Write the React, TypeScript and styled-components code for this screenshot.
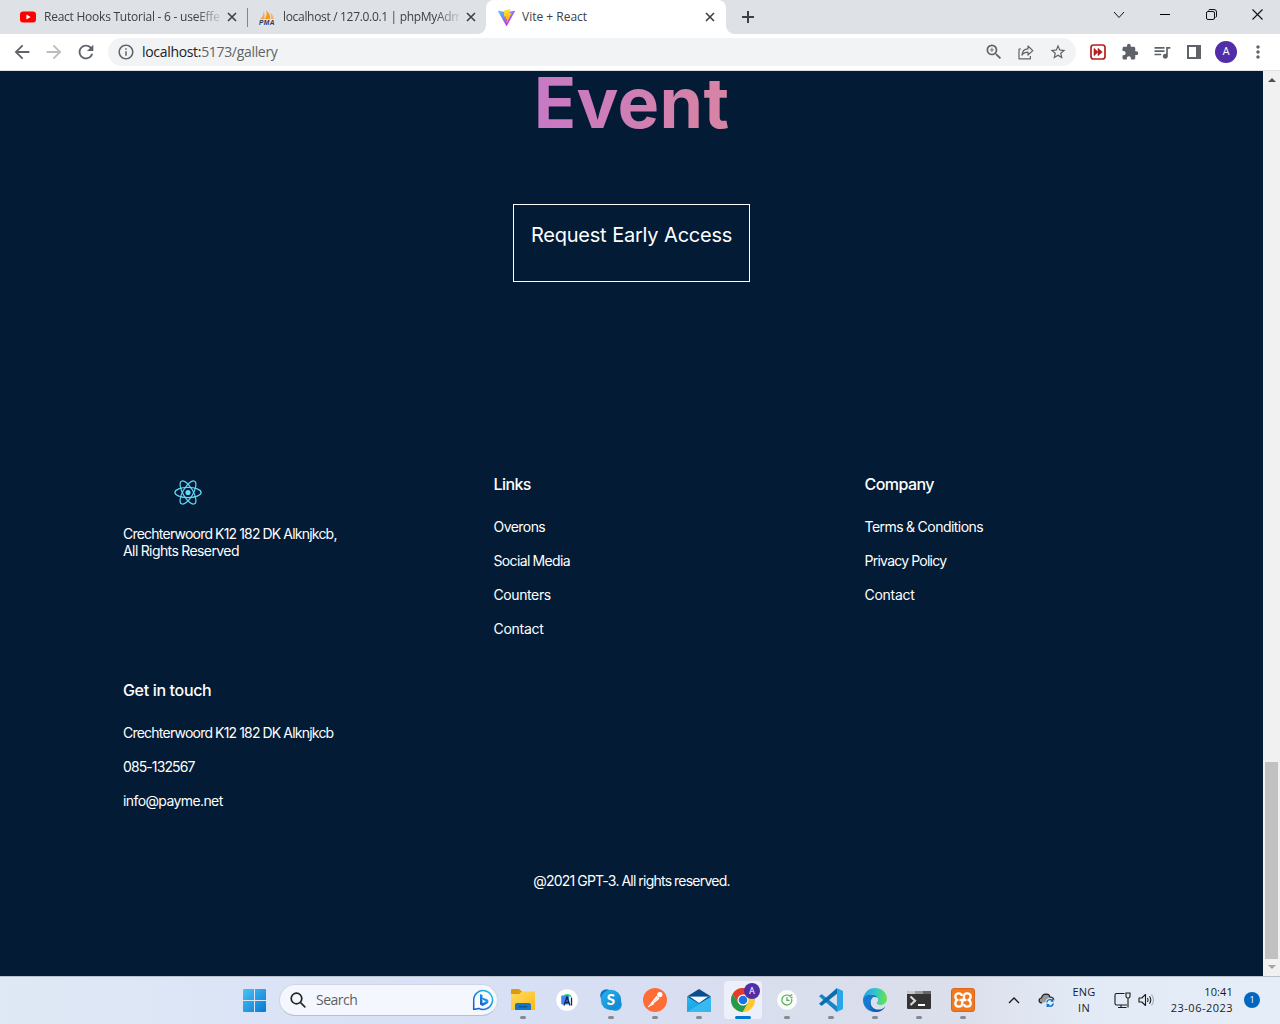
import React from "react";
import styled, { createGlobalStyle } from "styled-components";
import {
  MdArrowBack,
  MdArrowForward,
  MdRefresh,
  MdInfoOutline,
  MdZoomIn,
  MdStarBorder,
  MdExtension,
  MdQueueMusic,
  MdMoreVert,
} from "react-icons/md";

const uiFont = `"Open Sans", "Noto Sans", sans-serif`;
const pageFont = `Inter, "Liberation Sans", sans-serif`;

const GlobalStyle = createGlobalStyle`
  html, body { margin: 0; padding: 0; background: #031b34; }
  *, *::before, *::after { box-sizing: border-box; }
  p, h1, h4 { margin: 0; }
  svg { display: block; flex: none; }
`;

const Screen = styled.div`
  width: 1280px;
  height: 1024px;
  display: flex;
  flex-direction: column;
  overflow: hidden;
  font-family: ${uiFont};
`;

const TabStrip = styled.div`
  height: 34px;
  flex: none;
  display: flex;
  background: #dee1e6;
  color: #3c4043;
`;

const Tab = styled.div<{ $first?: boolean; $active?: boolean }>`
  position: relative;
  width: ${(p) => (p.$first ? 247 : p.$active ? 240 : 238)}px;
  height: 34px;
  display: flex;
  align-items: center;
  padding-left: ${(p) => (p.$first ? 20 : p.$active ? 12 : 11)}px;
  background: ${(p) => (p.$active ? "#fff" : "transparent")};
  border-radius: 8px 8px 0 0;
  ${(p) =>
    p.$active &&
    `
    &::before, &::after {
      content: "";
      position: absolute;
      bottom: 0;
      width: 8px;
      height: 8px;
    }
    &::before { left: -8px; background: radial-gradient(circle at 0 0, transparent 7.5px, #fff 8px); }
    &::after { right: -8px; background: radial-gradient(circle at 100% 0, transparent 7.5px, #fff 8px); }
  `}
`;

const TabDivider = styled.div`
  width: 1px;
  height: 19px;
  margin: 8px 0 0 0;
  background: #80868b;
`;

const TabTitle = styled.div<{ $ls: number; $fade?: boolean }>`
  width: 176px;
  margin-left: ${(p) => (p.$fade ? 8 : 7)}px;
  overflow: hidden;
  white-space: nowrap;
  font-size: 12px;
  line-height: 18px;
  letter-spacing: ${(p) => p.$ls}px;
  ${(p) => p.$fade && `mask-image: linear-gradient(to right, #000 152px, transparent 180px);`}
`;

const CloseSlot = styled.div`
  width: 24px;
  display: flex;
  justify-content: center;
`;

const NewTab = styled.div`
  width: 44px;
  display: flex;
  align-items: center;
  justify-content: center;
`;

const WindowControls = styled.div`
  margin-left: auto;
  height: 29px;
  display: flex;
`;

const WindowButton = styled.div`
  width: 46px;
  display: flex;
  align-items: center;
  justify-content: center;
  color: #111;
`;

const Toolbar = styled.div`
  height: 37px;
  flex: none;
  display: flex;
  align-items: center;
  padding: 0 6px 1px;
  background: #fff;
  border-bottom: 1px solid #dde1e2;
  color: #5f6368;
`;

const Slot = styled.div<{ $dim?: boolean }>`
  width: 32px;
  height: 28px;
  flex: none;
  display: flex;
  align-items: center;
  justify-content: center;
  color: ${(p) => (p.$dim ? "#babcbe" : "#5f6368")};
`;

const Omnibox = styled.div`
  flex: 1;
  height: 28px;
  margin: 0 6px;
  padding: 0 2px 0 9px;
  display: flex;
  align-items: center;
  border-radius: 14px;
  background: #f1f3f4;
`;

const Url = styled.div`
  flex: 1;
  margin-left: 7px;
  font-size: 14px;
  line-height: 20px;
  letter-spacing: -0.32px;
  color: #5f6368;
  b {
    font-weight: 400;
    color: #202124;
  }
`;

const Avatar = styled.div`
  width: 22px;
  height: 22px;
  border-radius: 50%;
  display: flex;
  align-items: center;
  justify-content: center;
  background: #512da8;
  color: #fff;
  font: 400 11px Roboto, sans-serif;
`;

const Viewport = styled.div`
  height: 905px;
  flex: none;
  display: flex;
`;

const Page = styled.main`
  flex: 1;
  display: flex;
  flex-direction: column;
  align-items: center;
  overflow: hidden;
  background: #031b34;
  color: #fff;
  font-family: ${pageFont};
`;

const Headline = styled.h1`
  width: 840px;
  height: 64px;
  text-align: center;
  font-size: 70px;
  line-height: 64px;
  font-weight: 700;
  letter-spacing: 0.3px;
  background: linear-gradient(90deg, #ae67fa 1.84%, #f49867 102.67%);
  background-clip: text;
  -webkit-background-clip: text;
  color: transparent;
`;

const AccessButton = styled.div`
  width: 237px;
  height: 78px;
  margin-top: 69px;
  padding-top: 17px;
  border: 1px solid #fff;
  text-align: center;
  font-size: 20px;
  line-height: 26px;
  letter-spacing: -0.24px;
  word-spacing: 0.5px;
  white-space: nowrap;
`;

const FooterGrid = styled.div`
  width: 1113px;
  margin-top: 191px;
  margin-left: 96px;
  display: grid;
  grid-template-columns: 370.5px 371px 371px;
  grid-template-rows: 206px 206px;
`;

const FooterColumn = styled.div`
  display: flex;
  flex-direction: column;
  align-items: flex-start;
`;

const LogoBox = styled.div`
  width: 130px;
  height: 38px;
  display: flex;
  justify-content: center;
  padding-top: 6px;
`;

const Address = styled.div`
  margin-top: 14px;
`;

const FooterHeading = styled.h4<{ $ls: number }>`
  height: 22px;
  margin-bottom: 23px;
  font-size: 16px;
  line-height: 22px;
  font-weight: 500;
  letter-spacing: ${(p) => p.$ls}px;
`;

const FooterText = styled.p<{ $ls: number; $gap?: number }>`
  height: 17px;
  margin-bottom: ${(p) => p.$gap ?? 17}px;
  font-size: 14px;
  line-height: 17px;
  white-space: nowrap;
  word-spacing: -0.4px;
  letter-spacing: ${(p) => p.$ls}px;
`;

const Copyright = styled.div`
  margin-top: -13px;
`;

const Scrollbar = styled.div`
  width: 17px;
  display: flex;
  flex-direction: column;
  align-items: center;
  justify-content: flex-end;
  background: #f1f1f1;
`;

const ScrollArrow = styled.div<{ $up?: boolean }>`
  width: 17px;
  height: 17px;
  display: flex;
  align-items: center;
  justify-content: center;
  padding-bottom: ${(p) => (p.$up ? 0 : 1)}px;
  margin-bottom: ${(p) => (p.$up ? "auto" : "0")};
`;

const ScrollThumb = styled.div`
  width: 13px;
  height: 197px;
  background: #c1c1c1;
`;

const Taskbar = styled.div`
  height: 48px;
  flex: none;
  display: flex;
  align-items: center;
  padding: 0 0 1px 236px;
  border-top: 1px solid #b9c1cd;
  background: linear-gradient(90deg, #dfe9f5 0, #dae4f6 20%, #d7dff4 45%, #d9deed 62%, #dcdfeb 75%, #e2eaf5 84%, #e5eef8 100%);
`;

const StartSlot = styled.div`
  width: 37px;
  display: flex;
  justify-content: center;
`;

const SearchBox = styled.div`
  width: 219px;
  height: 32px;
  margin: 0 3px 0 6px;
  padding: 0 3px 0 10px;
  display: flex;
  align-items: center;
  border: 1px solid #cfd5e5;
  border-bottom-color: #b9bfd0;
  border-radius: 16px;
  background: #f4f7fd;
`;

const SearchLabel = styled.div`
  flex: 1;
  margin-left: 10px;
  padding-bottom: 1px;
  font-size: 14px;
  letter-spacing: -0.5px;
  color: #5c5f66;
`;

const AppSlot = styled.div<{ $active?: boolean }>`
  position: relative;
  width: 38px;
  height: 38px;
  margin: 0 3px;
  display: flex;
  align-items: center;
  justify-content: center;
  border-radius: 4px;
  background: ${(p) => (p.$active ? "#edf0fa" : "transparent")};
`;

const Running = styled.i<{ $active?: boolean }>`
  position: absolute;
  bottom: 0;
  left: 50%;
  width: ${(p) => (p.$active ? 16 : 6)}px;
  height: 3px;
  transform: translateX(-50%);
  border-radius: 2px;
  background: ${(p) => (p.$active ? "#0078d4" : "#858993")};
`;

const ProfileBadge = styled.div`
  position: absolute;
  top: 2px;
  right: 2px;
  width: 16px;
  height: 16px;
  border-radius: 50%;
  display: flex;
  align-items: center;
  justify-content: center;
  background: #512da8;
  color: #fff;
  font: 400 9px Roboto, sans-serif;
`;

const Tray = styled.div`
  margin-left: auto;
  padding-right: 9px;
  height: 46px;
  display: flex;
  align-items: center;
  font-size: 11px;
  line-height: 16px;
  color: #1b1b1b;
`;

const TraySlot = styled.div<{ $w: number }>`
  width: ${(p) => p.$w}px;
  display: flex;
  justify-content: center;
`;

const Language = styled.div`
  width: 44px;
  margin-right: 4px;
  text-align: center;
  letter-spacing: 0.2px;
`;

const Clock = styled.div`
  width: 75px;
  text-align: right;
  white-space: nowrap;
`;

const ClockLine = styled.div<{ $ls: number }>`
  letter-spacing: ${(p) => p.$ls}px;
`;

const Notice = styled.div`
  width: 16px;
  height: 16px;
  margin: 0 11px;
  border-radius: 50%;
  background: #0067c0;
  color: #fff;
  text-align: center;
  font-size: 9px;
  line-height: 16px;
`;

const CloseIcon = () => (
  <svg width="10" height="10" viewBox="0 0 10 10" stroke="#3c4043" strokeWidth="1.6">
    <path d="M1 1l8 8M9 1L1 9" />
  </svg>
);

const YouTubeIcon = () => (
  <svg width="16" height="16" viewBox="0 0 16 16">
    <rect y="2.4" width="16" height="11.2" rx="3" fill="#f00" />
    <path d="M6.4 5.6v4.8L10.6 8z" fill="#fff" />
  </svg>
);

const PmaIcon = () => (
  <svg width="16" height="16" viewBox="0 0 16 16">
    <path d="M1.2 10.3Q4.6 7 4.8 2.6 6.2 6 5.2 10z" fill="#f3a64b" />
    <path d="M5.5 10Q8.6 6 7.2 1.4 11.6 4.5 11 10z" fill="#f89c0e" />
    <path d="M11.5 10Q12.8 7 11.3 4 14.8 6.5 14.8 10z" fill="#f5b56a" />
    <text x="0" y="15.8" fontFamily="Liberation Sans, sans-serif" fontSize="6.6" fontWeight="700" fontStyle="italic" textLength="15.5" fill="#34345c">PMA</text>
  </svg>
);

const ViteIcon = () => (
  <svg width="17" height="17" viewBox="0 0 256 257">
    <defs>
      <linearGradient id="viteA" x1="0" x2=".58" y1="0" y2=".8">
        <stop offset="0" stopColor="#41d1ff" />
        <stop offset="1" stopColor="#bd34fe" />
      </linearGradient>
      <linearGradient id="viteB" x1=".43" x2=".5" y1="0" y2="1">
        <stop offset="0" stopColor="#ffea83" />
        <stop offset=".1" stopColor="#ffdd35" />
        <stop offset="1" stopColor="#ffa800" />
      </linearGradient>
    </defs>
    <path fill="url(#viteA)" d="M255.153 37.938 134.897 252.976c-2.483 4.44-8.862 4.466-11.382.048L.875 37.958c-2.746-4.814 1.371-10.646 6.827-9.67l120.385 21.517a6.537 6.537 0 0 0 2.322-.004l117.867-21.483c5.438-.991 9.574 4.796 6.877 9.62Z" />
    <path fill="url(#viteB)" d="M185.432.063 96.44 17.501a3.268 3.268 0 0 0-2.634 3.014l-5.474 92.456a3.268 3.268 0 0 0 3.997 3.378l24.777-5.718c2.318-.535 4.413 1.507 3.936 3.838l-7.361 36.047c-.495 2.426 1.782 4.5 4.151 3.78l15.304-4.649c2.372-.72 4.652 1.36 4.15 3.788l-11.698 56.621c-.732 3.542 3.979 5.473 5.943 2.437l1.313-2.028 72.516-144.72c1.215-2.423-.88-5.186-3.54-4.672l-25.505 4.922c-2.396.462-4.435-1.77-3.759-4.114l16.646-57.705c.677-2.35-1.37-4.583-3.769-4.113Z" />
  </svg>
);

const ShareIcon = () => (
  <svg width="18" height="18" viewBox="0 0 18 18" fill="none" stroke="#5f6368" strokeWidth="1.2" strokeLinejoin="round">
    <path d="M4 6H2v9.8h11.4V13" />
    <path d="M5 12.2c.2-4 2.4-6.2 6-6.3V3l4.8 4.6L11 12V9.2c-2.8 0-4.6.8-6 3z" />
  </svg>
);

const ForwardExtIcon = () => (
  <svg width="16" height="16" viewBox="0 0 16 16">
    <rect x="1" y="1" width="14" height="14" rx="2.6" fill="#fff" stroke="#b3201f" strokeWidth="1.7" />
    <path d="M4 4.3 8 8l-4 3.7zM8 4.3 12.3 8 8 11.7z" fill="#b3201f" stroke="#b3201f" strokeWidth=".6" />
  </svg>
);

const SidePanelIcon = () => (
  <svg width="14" height="14" viewBox="0 0 14 14">
    <path d="M0 0h14v14H0zM2 2v10h7V2z" fill="#5f6368" fillRule="evenodd" />
  </svg>
);

const ReactLogo = () => (
  <svg width="28" height="27" viewBox="-14 -13.5 28 27" fill="none" stroke="#61dafb" strokeWidth="1.2">
    <ellipse rx="13.1" ry="5.1" />
    <ellipse rx="13.1" ry="5.1" transform="rotate(60)" />
    <ellipse rx="13.1" ry="5.1" transform="rotate(120)" />
    <circle r="2.6" fill="#61dafb" stroke="none" />
  </svg>
);

const WindowsIcon = () => (
  <svg width="23" height="23" viewBox="0 0 23 23">
    <defs>
      <linearGradient id="win" x1="0" y1="0" x2="1" y2="1">
        <stop offset="0" stopColor="#49c3f5" />
        <stop offset="1" stopColor="#0878d2" />
      </linearGradient>
    </defs>
    <path d="M0 1q0-1 1-1h10v11H0zM12 0h10q1 0 1 1v10H12zM0 12h11v11H1q-1 0-1-1zM12 12h11v10q0 1-1 1H12z" fill="url(#win)" />
  </svg>
);

const SearchIcon = () => (
  <svg width="16" height="16" viewBox="0 0 16 16" fill="none" stroke="#252525" strokeWidth="1.7" strokeLinecap="round">
    <circle cx="6.5" cy="6.5" r="5.3" />
    <path d="M10.5 10.5l4.3 4.3" />
  </svg>
);

const BingIcon = () => (
  <svg width="22" height="22" viewBox="0 0 22 22">
    <defs>
      <linearGradient id="bing" x1="1" y1="0" x2="0" y2="1">
        <stop offset="0" stopColor="#22c4ee" />
        <stop offset="1" stopColor="#1752cc" />
      </linearGradient>
    </defs>
    <path d="M1.7 20.3V11a9.4 9.4 0 1 1 5 8.3q-1.5.9-5 1z" fill="#f8fbff" stroke="url(#bing)" strokeWidth="1.5" />
    <path d="M8 5l2.5 1v8.3L14 12.3l-2.8-1.3-1-2.5 5 1.8q1.5.6 1.3 2.4-.2 1.3-1.4 2L10.3 17 8 15.5z" fill="url(#bing)" />
  </svg>
);

const FolderIcon = () => (
  <svg width="24" height="24" viewBox="0 0 24 24">
    <defs>
      <linearGradient id="folder" x1="0" y1="0" x2="1" y2="1">
        <stop offset="0" stopColor="#ffdc65" />
        <stop offset="1" stopColor="#fbb914" />
      </linearGradient>
    </defs>
    <path d="M0 2q0-1 1-1h7l3 2.5V9H0z" fill="#dd9b09" />
    <path d="M0 6h8l3-2.5h12q1 0 1 1V22H0z" fill="url(#folder)" />
    <path d="M4 22v-5q0-2 2-2h12q2 0 2 2v5z" fill="#1278c6" />
    <rect x="7.5" y="18" width="9" height="1.5" rx=".7" fill="#0a5798" />
  </svg>
);

const StudioIcon = () => (
  <svg width="22" height="22" viewBox="0 0 22 22">
    <circle cx="11" cy="11" r="10.8" fill="#fff" />
    <path d="M7 6.5a4.6 3.2 0 0 1 8.5 1.5z" fill="#3ddb86" />
    <rect x="5.2" y="6.5" width="8" height="9" rx="1" fill="#4285f4" />
    <path d="M8 16.5L11 8l3 8.5M9 13.5h4M15.5 8.5v8" fill="none" stroke="#10264c" strokeWidth="1.3" />
  </svg>
);

const SkypeIcon = () => (
  <svg width="22" height="22" viewBox="0 0 22 22">
    <defs>
      <linearGradient id="skype" x1="0" y1="0" x2="1" y2="1">
        <stop offset="0" stopColor="#28b5ed" />
        <stop offset="1" stopColor="#0b82cf" />
      </linearGradient>
    </defs>
    <circle cx="6.5" cy="6.5" r="6.3" fill="#0b75c3" />
    <circle cx="15.5" cy="15.5" r="6.3" fill="#0b98dd" />
    <circle cx="11" cy="11" r="10.2" fill="url(#skype)" />
    <text x="11" y="16.2" textAnchor="middle" fill="#fff" fontFamily="Lato, sans-serif" fontSize="15" fontWeight="900">S</text>
  </svg>
);

const PostmanIcon = () => (
  <svg width="24" height="24" viewBox="0 0 24 24">
    <circle cx="12" cy="12" r="12" fill="#ff6c37" />
    <circle cx="16.8" cy="6.6" r="2.7" fill="#fff" />
    <path d="M13.6 7.7l3 2.7-6.3 5.4-2.5-.8z" fill="#fff" />
    <path d="M5 19l4-4.5 1.8 1.4z" fill="#fff" stroke="#fff" strokeWidth=".7" />
    <path d="M9.8 14.3l5-4.3" stroke="#ff6c37" strokeWidth=".4" />
  </svg>
);

const MailIcon = () => (
  <svg width="24" height="23" viewBox="0 0 24 23">
    <defs>
      <linearGradient id="mail" x1="0" y1="0" x2="1" y2="1">
        <stop offset="0" stopColor="#24bcf0" />
        <stop offset="1" stopColor="#1690dd" />
      </linearGradient>
    </defs>
    <path d="M12 0l12 7.5H0z" fill="#0a4d8c" />
    <path d="M0 8h24v15H0z" fill="url(#mail)" />
    <path d="M0 23L24 8v15z" fill="#47c8f5" opacity=".65" />
    <path d="M0 7.5L12 14.8 24 7.5z" fill="#0a4d8c" />
    <path d="M3 7.7h18L12 14z" fill="#f3f6fa" />
  </svg>
);

const ChromeIcon = () => (
  <svg width="24" height="24" viewBox="0 0 24 24">
    <circle cx="12" cy="12" r="12" fill="#fcc934" />
    <path d="M12 6.5h10.7A12 12 0 0 0 1.6 6L7.2 15z" fill="#e33b2e" />
    <path d="M7.2 14.7L1.6 6A12 12 0 0 0 11.7 24L16.8 14.7 12 17.5z" fill="#229b4b" />
    <circle cx="12" cy="12" r="5.5" fill="#fff" />
    <circle cx="12" cy="12" r="4.3" fill="#1a73e8" />
  </svg>
);

const TimerIcon = () => (
  <svg width="22" height="22" viewBox="0 0 22 22" fill="none" stroke="#54ad54" strokeWidth="1.2">
    <circle cx="11" cy="11" r="10" fill="#fafcfa" stroke="none" />
    <path d="M13.8 7A5 5 0 1 0 15.6 9.5M11 8v3.3h2.5M13.3 7.5l3-2M14.5 8.3l2 .2" />
  </svg>
);

const CodeIcon = () => (
  <svg width="24" height="24" viewBox="0 0 24 24">
    <path d="M0 8.2L2 6.5q.6-.4 1.2 0L18 18.2V24z" fill="#1585ca" />
    <path d="M0 15.8l2 1.7q.6.4 1.2 0L18 5.8V0z" fill="#0b6cae" />
    <path d="M17.5 0l5.7 2.5q.8.4.8 1.2v16.6q0 .8-.8 1.2L17.5 24q-.8.2-1.3-.5 1.8.6 1.8-1V1.5q0-1.6-1.8-1 .5-.6 1.3-.5z" fill="#27a6ec" />
  </svg>
);

const EdgeIcon = () => (
  <svg width="24" height="24" viewBox="0 0 24 24">
    <defs>
      <linearGradient id="edgeA" x1="0" y1=".2" x2="1" y2=".3">
        <stop offset="0" stopColor="#1ea5e0" />
        <stop offset=".5" stopColor="#30c5cc" />
        <stop offset="1" stopColor="#64e44e" />
      </linearGradient>
      <linearGradient id="edgeB" x1="0" y1="0" x2="1" y2="1">
        <stop offset="0" stopColor="#1c86d8" />
        <stop offset="1" stopColor="#0c4b9b" />
      </linearGradient>
    </defs>
    <path d="M0 11.5C.7 4.8 5.6 0 12 0c7 0 12 5 12 10.5 0 4-3 6.5-6.5 6.5-2.5 0-4-1-3.7-2.2.8-1 1.2-1.7 1.2-3C15 9 12.5 6.5 9 6.5 4.5 6.5 1 8.5 0 11.5z" fill="url(#edgeA)" />
    <path d="M0 12C0 8.5 4 6.5 8.5 6.5c3 0 5 1.3 6 3-5-2-7 1.5-7 4.5C7.5 19 11 23 15 23.6 7 25.5 0 20 0 12z" fill="#1679d2" />
    <path d="M9.5 9.7c-3 2.8-2.3 9 2 11 4.3 2 8.5.5 10.8-2.3-2 4-5.6 5.6-9.3 5.6C7.5 24 5 19.5 5 15.5c0-3 1.8-5 4.5-5.8z" fill="url(#edgeB)" />
  </svg>
);

const TerminalIcon = () => (
  <svg width="24" height="20" viewBox="0 0 24 20">
    <rect y="1" width="24" height="18" rx="1" fill="#343434" />
    <path d="M0 2q0-1 1-1h7v3H0z" fill="#c8c8c8" />
    <path d="M8 1h8v3H8z" fill="#999" />
    <path d="M16 1h7q1 0 1 1v2h-8z" fill="#666" />
    <path d="M3.5 6.5L8 10.8 3.5 15" fill="none" stroke="#d8d8d8" strokeWidth="2.2" />
    <path d="M11 15h7" stroke="#fff" strokeWidth="2" />
  </svg>
);

const XamppIcon = () => (
  <svg width="24" height="24" viewBox="0 0 24 24" fill="none">
    <rect x=".5" y=".5" width="23" height="23" rx="2.5" fill="#f0781f" stroke="#d9651a" />
    <path
      d="M8 5.3c-2.7 0-3.7 1.600-3.700 3.400 0 1.500.7 2.500 1.900 3.300-1.200.8-1.900 1.800-1.900 3.300 0 1.800 1 3.400 3.700 3.400 2.600 0 3.200-1.500 3.200-3.500 0-1.700.2-2.200 1-3.200.7-1 .8-1.800.8-3.300 0-2 .7-3.400 3-3.400 2.700 0 3.700 1.600 3.700 3.400 0 1.500-.7 2.500-1.900 3.300 1.200.8 1.900 1.800 1.900 3.300 0 1.800-1 3.400-3.700 3.400-1.700 0-2.800-.9-3.100-2.600"
      stroke="#fff"
      strokeWidth="2.300"
    />
    <path d="M8 5.300c1.700 0 2.700 1 3 2.700M8.500 12h7" stroke="#fff" strokeWidth="2.300" />
  </svg>
);

const CloudIcon = () => (
  <svg width="17" height="16" viewBox="0 0 17 16">
    <path d="M4 10.8H3.5C.3 10.3.3 6.5 3.5 6 4.5 1 11 1 12 5c2.5 0 3.8 1.3 3.8 3.5" fill="#999" stroke="#222" strokeWidth="1.2" />
    <circle cx="12" cy="10.8" r="4.8" fill="#e6f1fb" />
    <path d="M8.7 10.3a3.4 3.4 0 0 1 6-1.5V6.9M14.7 9h-2M15.3 11.5a3.4 3.4 0 0 1-6 1.5v2M9.3 12.8h2" fill="none" stroke="#1475cf" strokeWidth="1.5" />
  </svg>
);

const NetworkIcon = () => (
  <svg width="17" height="17" viewBox="0 0 17 17" fill="none" stroke="#1b1b1b" strokeWidth="1.1">
    <path d="M10.5 1.5H2.5q-1.5 0-1.5 1.5v8.5q0 1.5 1.5 1.5H13M7 13v2.5M4 15.5h8.5" />
    <path d="M12 1h4v3.5q0 1.5-2 1.5t-2-1.5zM14 6v9.5" />
  </svg>
);

const SpeakerIcon = () => (
  <svg width="17" height="16" viewBox="0 0 17 16" fill="none" stroke="#1b1b1b" strokeWidth="1.1">
    <path d="M1 6h2.8L7.5 2.5v11L3.8 10H1z" strokeLinejoin="round" />
    <path d="M9.5 6q1.3 2 0 4M11.5 4.3q2.5 3.7 0 7.4" />
    <path d="M13.5 2.5q4 5.5 0 11" stroke="#a6abb2" />
  </svg>
);

const tabs = [
  { title: "React Hooks Tutorial - 6 - useEffe", ls: -0.24, icon: <YouTubeIcon /> },
  { title: "localhost / 127.0.0.1 | phpMyAdm", ls: -0.32, icon: <PmaIcon /> },
];

const linkColumns = [
  { heading: "Links", hls: -0.6, items: [["Overons", -0.55], ["Social Media", -0.65], ["Counters", -0.4], ["Contact", -0.27]] },
  { heading: "Company", hls: -0.55, items: [["Terms & Conditions", -0.53], ["Privacy Policy", -0.74], ["Contact", -0.27]] },
  { heading: "Get in touch", hls: -0.34, items: [["Crechterwoord K12 182 DK Alknjkcb", -0.77], ["085-132567", -0.9], ["info@payme.net", -0.6]] },
] as { heading: string; hls: number; items: [string, number][] }[];

const taskApps = [
  { icon: <FolderIcon />, running: true },
  { icon: <StudioIcon /> },
  { icon: <SkypeIcon />, running: true },
  { icon: <PostmanIcon />, running: true },
  { icon: <MailIcon />, running: true },
  { icon: <ChromeIcon />, running: true, active: true },
  { icon: <TimerIcon />, running: true },
  { icon: <CodeIcon />, running: true },
  { icon: <EdgeIcon />, running: true },
  { icon: <TerminalIcon />, running: true },
  { icon: <XamppIcon />, running: true },
];

export default function App() {
  return (
    <Screen>
      <GlobalStyle />
      <TabStrip>
        {tabs.map((tab, i) => (
          <React.Fragment key={tab.title}>
            <Tab $first={i === 0}>
              {tab.icon}
              <TabTitle $ls={tab.ls} $fade>{tab.title}</TabTitle>
              <CloseSlot><CloseIcon /></CloseSlot>
            </Tab>
            {i === 0 && <TabDivider />}
          </React.Fragment>
        ))}
        <Tab $active>
          <ViteIcon />
          <TabTitle $ls={0}>Vite + React</TabTitle>
          <CloseSlot><CloseIcon /></CloseSlot>
        </Tab>
        <NewTab>
          <svg width="12" height="12" viewBox="0 0 12 12" stroke="#3c4043" strokeWidth="2"><path d="M6 0v12M0 6h12" /></svg>
        </NewTab>
        <WindowControls>
          <WindowButton>
            <svg width="12" height="8" viewBox="0 0 12 8" fill="none" stroke="currentColor"><path d="M1 1l5 5.5L11 1" /></svg>
          </WindowButton>
          <WindowButton>
            <svg width="10" height="1" viewBox="0 0 10 1"><path d="M0 0h10v1H0z" /></svg>
          </WindowButton>
          <WindowButton>
            <svg width="11" height="11" viewBox="0 0 11 11" fill="none" stroke="currentColor">
              <rect x=".5" y="2.5" width="8" height="8" rx="1.5" />
              <path d="M2.5 1.5q.3-1 1.5-1h4q2.5 0 2.5 2.5v4q0 1.2-1 1.5" />
            </svg>
          </WindowButton>
          <WindowButton>
            <svg width="11" height="11" viewBox="0 0 11 11" stroke="currentColor" strokeWidth="1.1"><path d="M.5.5l10 10M10.5.5l-10 10" /></svg>
          </WindowButton>
        </WindowControls>
      </TabStrip>
      <Toolbar>
        <Slot><MdArrowBack size={22} /></Slot>
        <Slot $dim><MdArrowForward size={22} /></Slot>
        <Slot><MdRefresh size={22} /></Slot>
        <Omnibox>
          <MdInfoOutline size={18} />
          <Url><b>localhost:</b>5173/gallery</Url>
          <Slot><MdZoomIn size={20} /></Slot>
          <Slot><ShareIcon /></Slot>
          <Slot><MdStarBorder size={18} /></Slot>
        </Omnibox>
        <Slot><ForwardExtIcon /></Slot>
        <Slot><MdExtension size={18} /></Slot>
        <Slot><MdQueueMusic size={20} /></Slot>
        <Slot><SidePanelIcon /></Slot>
        <Slot><Avatar>A</Avatar></Slot>
        <Slot><MdMoreVert size={20} /></Slot>
      </Toolbar>
      <Viewport>
        <Page>
          <Headline>Event</Headline>
          <AccessButton>Request Early Access</AccessButton>
          <FooterGrid>
            <FooterColumn>
              <LogoBox><ReactLogo /></LogoBox>
              <Address>
                <FooterText $ls={-0.77} $gap={0}>Crechterwoord K12 182 DK Alknjkcb,</FooterText>
                <FooterText $ls={-0.58} $gap={0}>All Rights Reserved</FooterText>
              </Address>
            </FooterColumn>
            {linkColumns.map((col) => (
              <FooterColumn key={col.heading}>
                <FooterHeading $ls={col.hls}>{col.heading}</FooterHeading>
                {col.items.map(([label, ls]) => (
                  <FooterText key={label} $ls={ls}>{label}</FooterText>
                ))}
              </FooterColumn>
            ))}
          </FooterGrid>
          <Copyright>
            <FooterText $ls={-0.77}>@2021 GPT-3. All rights reserved.</FooterText>
          </Copyright>
        </Page>
        <Scrollbar>
          <ScrollArrow $up>
            <svg width="8" height="4" viewBox="0 0 8 4"><path d="M0 4L4 0l4 4z" fill="#505050" /></svg>
          </ScrollArrow>
          <ScrollThumb />
          <ScrollArrow>
            <svg width="8" height="4" viewBox="0 0 8 4"><path d="M0 0l4 4 4-4z" fill="#a3a3a3" /></svg>
          </ScrollArrow>
        </Scrollbar>
      </Viewport>
      <Taskbar>
        <StartSlot><WindowsIcon /></StartSlot>
        <SearchBox>
          <SearchIcon />
          <SearchLabel>Search</SearchLabel>
          <BingIcon />
        </SearchBox>
        {taskApps.map((app, i) => (
          <AppSlot key={i} $active={app.active}>
            {app.icon}
            {app.active && <ProfileBadge>A</ProfileBadge>}
            {app.running && <Running $active={app.active} />}
          </AppSlot>
        ))}
        <Tray>
          <TraySlot $w={32}>
            <svg width="12" height="7" viewBox="0 0 12 7" fill="none" stroke="#1b1b1b" strokeWidth="1.3"><path d="M1 6l5-5 5 5" /></svg>
          </TraySlot>
          <TraySlot $w={32}><CloudIcon /></TraySlot>
          <Language>ENG<br />IN</Language>
          <TraySlot $w={24}><NetworkIcon /></TraySlot>
          <TraySlot $w={24}><SpeakerIcon /></TraySlot>
          <Clock>
            <ClockLine $ls={0.15}>10:41</ClockLine>
            <ClockLine $ls={0.48}>23-06-2023</ClockLine>
          </Clock>
          <Notice>1</Notice>
        </Tray>
      </Taskbar>
    </Screen>
  );
}
